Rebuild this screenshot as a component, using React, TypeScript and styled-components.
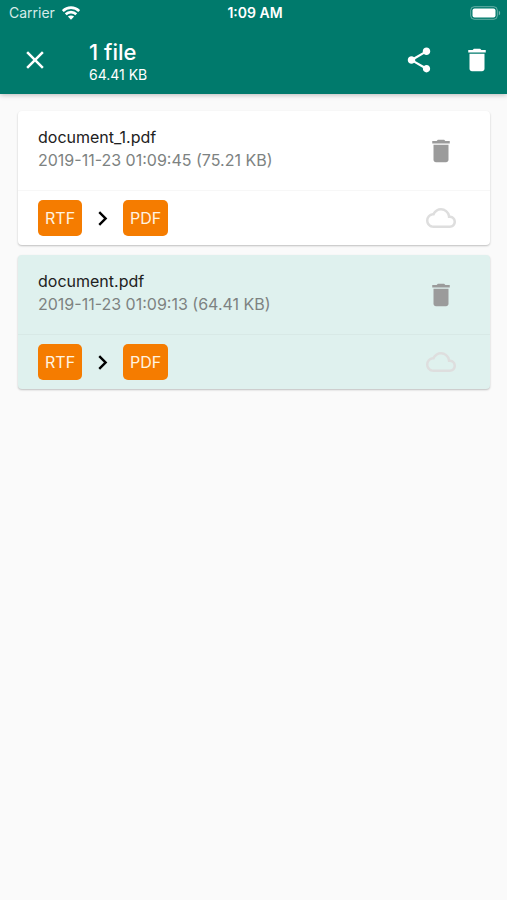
import React from "react";
import styled, { createGlobalStyle } from "styled-components";
import {
  MdChevronRight,
  MdClose,
  MdCloudQueue,
  MdDelete,
  MdShare,
} from "react-icons/md";

const GlobalStyle = createGlobalStyle`
  * { box-sizing: border-box; }
  body {
    margin: 0;
    background: #fafafa;
    color: #212121;
    font-family: Inter, "Liberation Sans", sans-serif;
  }
`;

const Header = styled.header`
  background: #007a6c;
  color: #fff;
  box-shadow: 0 1px 5px rgba(0, 0, 0, 0.26);
`;

const StatusBar = styled.div`
  display: grid;
  grid-template-columns: 1fr auto 1fr;
  align-items: center;
  height: 26px;
  padding: 0 6px 0 9px;
  font-size: 14px;
  line-height: 26px;
`;

const Carrier = styled.span`
  display: flex;
  align-items: center;
  gap: 7px;
  color: #d6ebe8;
`;

const Clock = styled.time`
  font-size: 14px;
  font-weight: 600;
`;

const Battery = styled.svg`
  justify-self: end;
`;

const Toolbar = styled.div`
  display: flex;
  align-items: center;
  height: 68px;
  padding: 0 10px 0 15px;
`;

const IconButton = styled.button<{ $tone?: string }>`
  display: flex;
  align-items: center;
  justify-content: center;
  flex: none;
  width: 40px;
  height: 40px;
  padding: 0;
  border: 0;
  background: none;
  color: ${({ $tone }) => $tone ?? "#fff"};
  cursor: pointer;
`;

const Heading = styled.div`
  flex: 1;
  min-width: 0;
  margin-left: 34px;
  padding-top: 4px;
`;

const Title = styled.h1`
  margin: 0;
  font-size: 22px;
  font-weight: 500;
  line-height: 26px;
`;

const Subtitle = styled.p`
  margin: 0;
  font-size: 14px;
  line-height: 20px;
`;

const Actions = styled.div`
  display: flex;
  gap: 18px;
`;

const FileList = styled.ul`
  display: flex;
  flex-direction: column;
  gap: 10px;
  margin: 0;
  padding: 17px 17px 17px 18px;
  list-style: none;
`;

const Card = styled.li<{ $selected: boolean }>`
  border-radius: 4px;
  background: ${({ $selected }) => ($selected ? "#dff1ee" : "#fff")};
  box-shadow: 0 1px 2px rgba(0, 0, 0, 0.24);
`;

const Row = styled.div<{ $divided?: boolean }>`
  display: flex;
  align-items: center;
  justify-content: space-between;
  height: ${({ $divided }) => ($divided ? "55px" : "79px")};
  padding: 0 29px 0 20px;
  border-top: ${({ $divided }) =>
    $divided ? "1px solid rgba(0, 0, 0, 0.03)" : "0"};
`;

const Details = styled.div`
  min-width: 0;
  padding-bottom: 3px;
  font-size: 16px;
  line-height: 23px;
`;

const FileName = styled.h2`
  margin: 0;
  font: inherit;
`;

const Meta = styled.p`
  margin: 0;
  color: #7d8281;
`;

const Conversion = styled.div`
  display: flex;
  align-items: center;
  gap: 6px;
`;

const Format = styled.span`
  padding: 0 7px;
  border-radius: 5px;
  background: #f57c00;
  color: #fff3e0;
  font-size: 16px;
  line-height: 36px;
`;

const files = [
  {
    name: "document_1.pdf",
    date: "2019-11-23 01:09:45",
    size: "75.21 KB",
    selected: false,
  },
  {
    name: "document.pdf",
    date: "2019-11-23 01:09:13",
    size: "64.41 KB",
    selected: true,
  },
];

function WifiIcon() {
  return (
    <svg width="18" height="14" viewBox="0 0 18 14" aria-hidden="true">
      <g fill="none" stroke="#fff" strokeWidth="2.6">
        <path d="M.8 5.1C5.4.5 12.6.5 17.2 5.1" />
        <path d="M3.7 8.3c3-2.9 7.6-2.9 10.6 0" />
      </g>
      <path d="M5.9 10.6c1.8-1.6 4.4-1.6 6.2 0L9 13.7z" fill="#fff" />
    </svg>
  );
}

function BatteryIcon() {
  return (
    <Battery width="31" height="14" viewBox="0 0 31 14" role="img" aria-label="Battery full">
      <rect x=".7" y=".7" width="26.6" height="12.6" rx="3.6" fill="none" stroke="#fff" strokeOpacity=".4" />
      <rect x="2.5" y="2.5" width="23" height="9" rx="2" fill="#fff" />
      <path d="M28.8 4.7c1.8.7 1.8 3.9 0 4.6z" fill="#fff" fillOpacity=".45" />
    </Battery>
  );
}

export default function App() {
  return (
    <>
      <GlobalStyle />
      <Header>
        <StatusBar>
          <Carrier>
            Carrier
            <WifiIcon />
          </Carrier>
          <Clock>1:09 AM</Clock>
          <BatteryIcon />
        </StatusBar>
        <Toolbar>
          <IconButton type="button" aria-label="Close selection">
            <MdClose size={30} />
          </IconButton>
          <Heading>
            <Title>1 file</Title>
            <Subtitle>64.41 KB</Subtitle>
          </Heading>
          <Actions>
            <IconButton type="button" aria-label="Share">
              <MdShare size={30} />
            </IconButton>
            <IconButton type="button" aria-label="Delete selected">
              <MdDelete size={30} />
            </IconButton>
          </Actions>
        </Toolbar>
      </Header>
      <main>
        <FileList>
          {files.map((file) => (
            <Card key={file.name} $selected={file.selected}>
              <Row>
                <Details>
                  <FileName>{file.name}</FileName>
                  <Meta>
                    {file.date} ({file.size})
                  </Meta>
                </Details>
                <IconButton type="button" $tone="#9b9b9b" aria-label={`Delete ${file.name}`}>
                  <MdDelete size={30} />
                </IconButton>
              </Row>
              <Row $divided>
                <Conversion>
                  <Format>RTF</Format>
                  <MdChevronRight size={29} color="#000" aria-label="to" />
                  <Format>PDF</Format>
                </Conversion>
                <IconButton type="button" $tone="#dedede" aria-label={`Upload ${file.name}`}>
                  <MdCloudQueue size={30} />
                </IconButton>
              </Row>
            </Card>
          ))}
        </FileList>
      </main>
    </>
  );
}
